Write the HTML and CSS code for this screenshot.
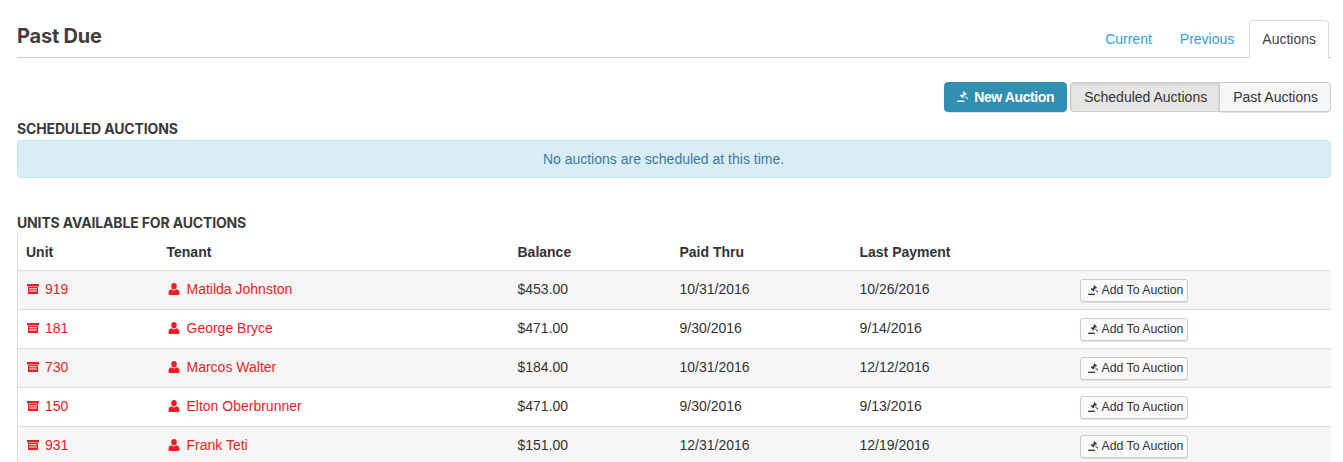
FILE: index.html
```html
<!DOCTYPE html>
<html lang="en">
<head>
    <meta charset="UTF-8">
    <title>Past Due - Auctions</title>
    <link rel="stylesheet" href="styles.css">
</head>
<body>
    <svg class="icon-defs" width="0" height="0">
        <symbol id="gavel" viewBox="0 0 14 12">
            <path d="M0 10.400h8v1.600H0z"/>
            <path d="M6.200 1.400 7.400.4l3.200 3-1.200 1.200-.9-.8-.9.900 4.600 3.500-.8 1-3.900-4.200-.9.900.8.800-1.200 1.200-3.200-3 1.200-1.200.8.800 2-2.100z"/>
        </symbol>
        <symbol id="unit" viewBox="0 0 12 10">
            <path d="M0 0h12v2.400H0zM1 3h10v7H1zM2.200 4.300v1h7.600v-1zm0 2.300v1h7.600v-1z" fill-rule="evenodd"/>
        </symbol>
        <symbol id="person" viewBox="0 0 12 12">
            <path d="M6 0c1.700 0 2.800 1.300 2.800 3.100C8.800 5 7.800 6.500 6 6.500S3.200 5 3.200 3.100C3.200 1.300 4.300 0 6 0zM3.500 6.300C4.200 7 5 7.400 6 7.400s1.800-.4 2.500-1.100C10.500 6.700 11.500 8 11.500 10.500 11.500 11.500 10.900 12 10 12H2C1.100 12 .5 11.500.5 10.500.5 8 1.500 6.700 3.500 6.300z"/>
        </symbol>
    </svg>

    <div class="page-header">
        <h1>Past Due</h1>
        <ul class="tabs">
            <li><a href="#">Current</a></li>
            <li><a href="#">Previous</a></li>
            <li class="active"><a href="#">Auctions</a></li>
        </ul>
    </div>

    <div class="toolbar">
        <a href="#" class="btn btn-primary"><svg class="icon-gavel"><use href="#gavel"/></svg>New Auction</a>
        <div class="btn-group">
            <a href="#" class="btn btn-pressed">Scheduled Auctions</a>
            <a href="#" class="btn">Past Auctions</a>
        </div>
    </div>

    <h2 class="section-title">Scheduled Auctions</h2>
    <div class="alert">No auctions are scheduled at this time.</div>

    <h2 class="section-title">Units Available For Auctions</h2>
    <table class="units">
        <thead>
            <tr>
                <th class="col-unit">Unit</th>
                <th class="col-tenant">Tenant</th>
                <th class="col-balance">Balance</th>
                <th class="col-paid">Paid Thru</th>
                <th class="col-last">Last Payment</th>
                <th></th>
            </tr>
        </thead>
        <tbody>
            <tr>
                <td><a href="#"><svg class="icon-unit"><use href="#unit"/></svg>919</a></td>
                <td><a href="#"><svg class="icon-person"><use href="#person"/></svg>Matilda Johnston</a></td>
                <td>$453.00</td>
                <td>10/31/2016</td>
                <td>10/26/2016</td>
                <td><a href="#" class="btn-small"><svg class="icon-gavel"><use href="#gavel"/></svg>Add To Auction</a></td>
            </tr>
            <tr>
                <td><a href="#"><svg class="icon-unit"><use href="#unit"/></svg>181</a></td>
                <td><a href="#"><svg class="icon-person"><use href="#person"/></svg>George Bryce</a></td>
                <td>$471.00</td>
                <td>9/30/2016</td>
                <td>9/14/2016</td>
                <td><a href="#" class="btn-small"><svg class="icon-gavel"><use href="#gavel"/></svg>Add To Auction</a></td>
            </tr>
            <tr>
                <td><a href="#"><svg class="icon-unit"><use href="#unit"/></svg>730</a></td>
                <td><a href="#"><svg class="icon-person"><use href="#person"/></svg>Marcos Walter</a></td>
                <td>$184.00</td>
                <td>10/31/2016</td>
                <td>12/12/2016</td>
                <td><a href="#" class="btn-small"><svg class="icon-gavel"><use href="#gavel"/></svg>Add To Auction</a></td>
            </tr>
            <tr>
                <td><a href="#"><svg class="icon-unit"><use href="#unit"/></svg>150</a></td>
                <td><a href="#"><svg class="icon-person"><use href="#person"/></svg>Elton Oberbrunner</a></td>
                <td>$471.00</td>
                <td>9/30/2016</td>
                <td>9/13/2016</td>
                <td><a href="#" class="btn-small"><svg class="icon-gavel"><use href="#gavel"/></svg>Add To Auction</a></td>
            </tr>
            <tr>
                <td><a href="#"><svg class="icon-unit"><use href="#unit"/></svg>931</a></td>
                <td><a href="#"><svg class="icon-person"><use href="#person"/></svg>Frank Teti</a></td>
                <td>$151.00</td>
                <td>12/31/2016</td>
                <td>12/19/2016</td>
                <td><a href="#" class="btn-small"><svg class="icon-gavel"><use href="#gavel"/></svg>Add To Auction</a></td>
            </tr>
        </tbody>
    </table>
</body>
</html>
```

FILE: styles.css
```css
html {
    overflow: hidden;
}
body {
    font-family: 'Liberation Sans', Arial, sans-serif;
    font-size: 14px;
    line-height: 20px;
    color: #333;
    margin: 0;
    padding: 20px 12px 0 17px;
    background-color: #fff;
}
a {
    text-decoration: none;
}
.icon-defs {
    position: absolute;
}
.page-header {
    display: flex;
    justify-content: space-between;
    align-items: flex-end;
    height: 37px;
    border-bottom: 1px solid #ccc;
    padding-right: 2px;
}
h1 {
    font-family: 'Inter', sans-serif;
    font-size: 20px;
    font-weight: 700;
    line-height: 22px;
    letter-spacing: -0.2px;
    color: #433d3a;
    margin: 0 0 10px;
}
.tabs {
    display: flex;
    list-style: none;
    margin: 0 0 -1px;
    padding: 0;
}
.tabs li a {
    display: block;
    height: 37px;
    padding: 8px 13px 0;
    box-sizing: border-box;
    color: #2f9fe0;
    border: 1px solid transparent;
    border-bottom: none;
}
.tabs li.active {
    margin-left: 1px;
}
.tabs li.active a {
    color: #444;
    background-color: #fff;
    border-color: #ddd;
    border-radius: 4px 4px 0 0;
    height: 38px;
    padding: 8px 12px 0;
}
.toolbar {
    display: flex;
    justify-content: flex-end;
    gap: 3px;
    margin-top: 24px;
    margin-bottom: 9px;
}
.btn {
    display: block;
    height: 30px;
    line-height: 28px;
    box-sizing: border-box;
    padding: 0 12px;
    color: #333;
    background-color: #f7f7f7;
    border: 1px solid #ccc;
    border-radius: 4px;
    box-shadow: 0 1px 1px rgba(0,0,0,0.1);
}
.btn-primary {
    width: 123px;
    padding: 0;
    text-align: center;
    font-weight: bold;
    letter-spacing: -0.4px;
    color: #fff;
    background-color: #3190b2;
    border-color: #3190b2;
}
.btn-primary .icon-gavel {
    width: 13px;
    height: 11px;
    margin-right: 4px;
    fill: #fff;
}
.btn-group {
    display: flex;
}
.btn-group .btn:first-child {
    border-radius: 4px 0 0 4px;
    border-right: none;
    padding: 0 12px 0 13px;
}
.btn-group .btn:last-child {
    border-radius: 0 4px 4px 0;
    padding: 0 12px 0 13px;
}
.btn-pressed {
    background-color: #e6e6e6;
    box-shadow: inset 0 2px 3px rgba(0,0,0,0.1);
}
.section-title {
    font-family: 'Inter', sans-serif;
    font-size: 14px;
    font-weight: 700;
    line-height: 16px;
    text-transform: uppercase;
    letter-spacing: -0.15px;
    color: #3a3a3a;
    margin: 0;
    padding-bottom: 2px;
}
.alert {
    height: 38px;
    line-height: 36px;
    box-sizing: border-box;
    padding-right: 21px;
    text-align: center;
    color: #3a7ba3;
    background-color: #d9edf7;
    border: 1px solid #bce8f1;
    border-radius: 4px;
    margin-top: 1px;
    margin-bottom: 37px;
}
.units {
    width: 100%;
    border-collapse: collapse;
    table-layout: fixed;
    border-left: 1px solid #ddd;
}
.units th {
    height: 37px;
    padding: 2px 0 0 8px;
    text-align: left;
    font-weight: bold;
    color: #333;
    border-bottom: 1px solid #ddd;
    box-sizing: border-box;
}
.units td {
    height: 39px;
    padding: 0 0 2px 8px;
    border-bottom: 1px solid #ddd;
    box-sizing: border-box;
}
.units tbody tr:nth-child(odd) {
    background-color: #f6f6f6;
}
.units td a {
    color: #ee1c25;
}
.col-unit { width: 141px; }
.col-tenant { width: 351px; }
.col-balance { width: 162px; }
.col-paid { width: 180px; }
.col-last { width: 220px; }
.icon-unit {
    width: 12px;
    height: 10px;
    margin: 0 6px 0 1px;
    fill: #ee1c25;
}
.icon-person {
    width: 12px;
    height: 12px;
    margin: 0 7px 0 1px;
    vertical-align: -1px;
    fill: #ee1c25;
}
.units td a.btn-small {
    display: inline-block;
    height: 23px;
    line-height: 21px;
    box-sizing: border-box;
    padding: 0 4px 0 7px;
    margin-top: 4px;
    font-size: 12.300px;
    color: #333;
    background-color: #f9f9f9;
    border: 1px solid #ccc;
    border-radius: 3px;
    box-shadow: 0 1px 1px rgba(0,0,0,0.1);
}
.btn-small .icon-gavel {
    width: 12px;
    height: 10px;
    margin-right: 2px;
    vertical-align: -1px;
    fill: #333;
}
```
